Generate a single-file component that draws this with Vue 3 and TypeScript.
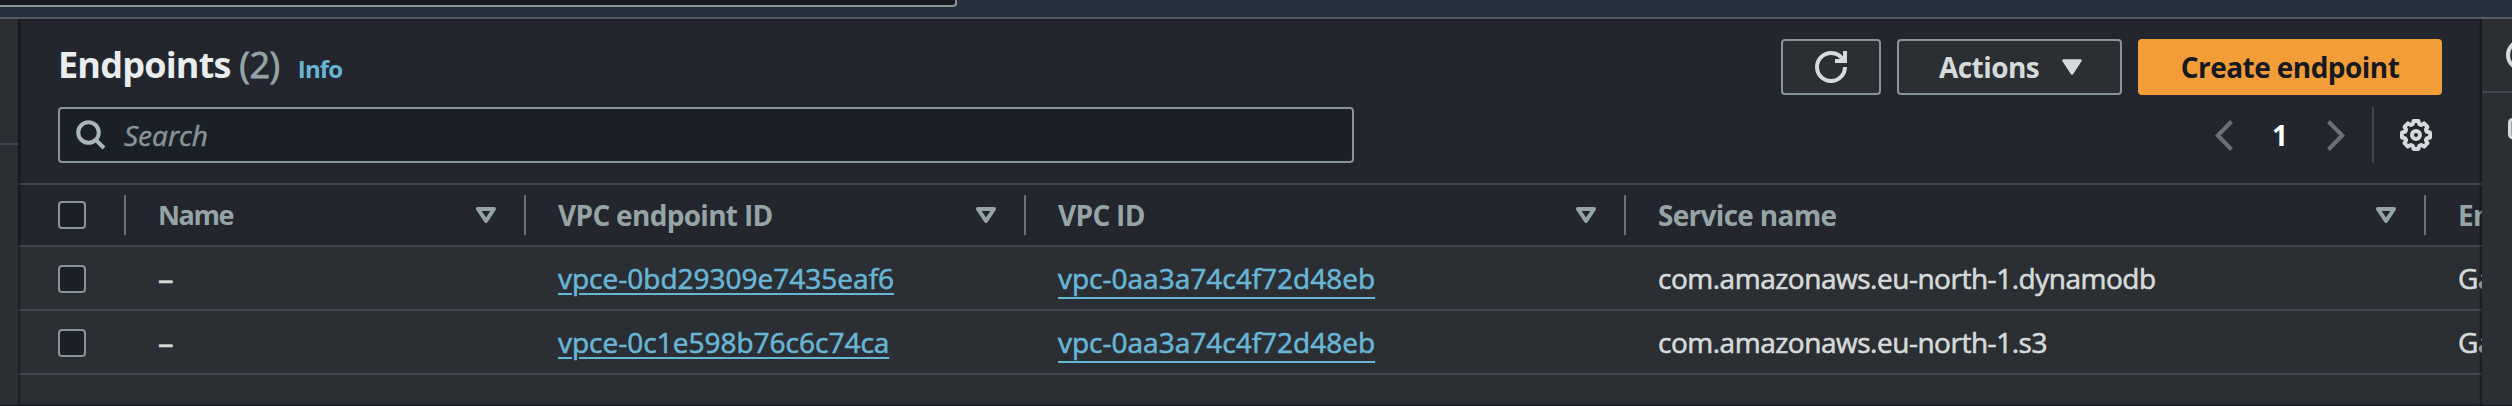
<script setup lang="ts">
interface Column {
  key: string
  label: string
  sortable: boolean
}

interface Endpoint {
  name: string
  endpointId: string
  vpcId: string
  service: string
  type: string
}

const columns: Column[] = [
  { key: 'name', label: 'Name', sortable: true },
  { key: 'endpoint', label: 'VPC endpoint ID', sortable: true },
  { key: 'vpc', label: 'VPC ID', sortable: true },
  { key: 'service', label: 'Service name', sortable: true },
  { key: 'type', label: 'Endpoint type', sortable: false },
]

const endpoints: Endpoint[] = [
  {
    name: '–',
    endpointId: 'vpce-0bd29309e7435eaf6',
    vpcId: 'vpc-0aa3a74c4f72d48eb',
    service: 'com.amazonaws.eu-north-1.dynamodb',
    type: 'Gateway',
  },
  {
    name: '–',
    endpointId: 'vpce-0c1e598b76c6c74ca',
    vpcId: 'vpc-0aa3a74c4f72d48eb',
    service: 'com.amazonaws.eu-north-1.s3',
    type: 'Gateway',
  },
]
</script>

<template>
  <div class="console">
    <header class="topnav"><div class="nav-search"></div></header>
    <div class="body">
      <aside class="rail left"><div class="rail-head"></div></aside>
      <main class="panel">
        <section class="head">
          <div class="title-row">
            <h1><span class="t-main">Endpoints</span> <span class="count">(2)</span></h1>
            <a class="info">Info</a>
            <div class="actions">
              <button class="btn icon-btn" aria-label="Refresh">
                <svg width="32" height="32" viewBox="0 0 16 16" fill="none" stroke="currentColor" stroke-width="2">
                  <path d="M15 8c0 3.87-3.13 7-7 7s-7-3.13-7-7 3.13-7 7-7c2.79 0 5.2 1.63 6.33 4" />
                  <path d="M10 5h5V0" />
                </svg>
              </button>
              <button class="btn menu-btn">
                <span class="t-actions">Actions</span>
                <svg width="20" height="16" viewBox="0 0 20 16"><path d="M1.5 1.5h17L10 14.5z" fill="currentColor" stroke="currentColor" stroke-width="2.5" stroke-linejoin="round" /></svg>
              </button>
              <button class="btn primary"><span class="t-create">Create endpoint</span></button>
            </div>
          </div>
          <div class="filter-row">
            <div class="search">
              <svg width="30" height="30" viewBox="0 0 30 30" fill="none" stroke="currentColor" stroke-width="4">
                <circle cx="12.5" cy="12.5" r="10.3" />
                <path d="M19.8 19.8l8.2 8.2" />
              </svg>
              <span class="t-search">Search</span>
            </div>
            <div class="pager">
              <svg width="18" height="31" viewBox="0 0 18 31" fill="none" stroke="currentColor" stroke-width="4"><path d="M16.5 1.5L2.8 15.5l13.7 14" /></svg>
              <span class="page">1</span>
              <svg width="18" height="31" viewBox="0 0 18 31" fill="none" stroke="currentColor" stroke-width="4"><path d="M1.5 1.5l13.7 14-13.7 14" /></svg>
            </div>
            <div class="prefs">
              <svg width="32" height="32" viewBox="0 0 32 32" fill="none" stroke="currentColor" stroke-width="4">
                <circle cx="16" cy="16" r="4" />
                <path stroke-linejoin="round" d="M13.6 2h4.8l.9 3.2 1.9.8 2.9-1.6 3.4 3.4-1.6 2.9.8 1.9 3.3.9v5l-3.3.9-.8 1.9 1.6 2.9-3.4 3.4-2.9-1.6-1.9.8-.9 3.2h-4.8l-.9-3.2-1.9-.8-2.9 1.6-3.4-3.4 1.6-2.9-.8-1.9-3.3-.9v-5l3.3-.9.8-1.9-1.6-2.9 3.4-3.4 2.9 1.6 1.9-.8z" />
              </svg>
            </div>
          </div>
        </section>
        <div class="row header-row">
          <div class="cell check"><i class="box"></i></div>
          <div v-for="c in columns" :key="c.key" class="cell">
            <span :class="'h-' + c.key">{{ c.label }}</span>
            <svg v-if="c.sortable" class="sort" width="20" height="16" viewBox="0 0 20 16"><path d="M2 2h16L10 14z" fill="none" stroke="currentColor" stroke-width="4" stroke-linejoin="round" /></svg>
          </div>
        </div>
        <div v-for="e in endpoints" :key="e.endpointId" class="row">
          <div class="cell check"><i class="box"></i></div>
          <div class="cell"><span class="dash">{{ e.name }}</span></div>
          <div class="cell"><a class="link id">{{ e.endpointId }}</a></div>
          <div class="cell"><a class="link vpc">{{ e.vpcId }}</a></div>
          <div class="cell"><span class="service">{{ e.service }}</span></div>
          <div class="cell"><span>{{ e.type }}</span></div>
        </div>
      </main>
      <aside class="rail right">
        <div class="rail-tool">
          <svg width="32" height="32" viewBox="0 0 32 32" fill="none" stroke="currentColor" stroke-width="4"><circle cx="16" cy="16" r="14" /><path d="M16 14v9M16 8v4" /></svg>
        </div>
        <div class="rail-tool second">
          <svg width="32" height="32" viewBox="0 0 32 32" fill="#9ba3a5" stroke="currentColor" stroke-width="3"><rect x="3.5" y="6.5" width="24" height="18" rx="3" /></svg>
        </div>
      </aside>
    </div>
  </div>
</template>

<style>
body {
  background: #2a2e33;
  overflow: hidden;
}
</style>

<style scoped>
* {
  box-sizing: border-box;
}
.console {
  display: flex;
  flex-direction: column;
  width: 2512px;
  height: 406px;
  overflow: hidden;
  background: #2b2e33;
  border-bottom: 1px solid #16191f;
  color: #d5dbdb;
  font: 400 28px/40px "Open Sans", "Noto Sans", sans-serif;
}
.console span,
.link,
.info {
  white-space: nowrap;
}
.topnav {
  flex: none;
  height: 19px;
  background: #262f3e;
  border-bottom: 2px solid #545b64;
}
.nav-search {
  width: 957px;
  height: 7px;
  background: #16191f;
  border: solid #879596;
  border-width: 0 2px 2px 0;
  border-radius: 0 0 4px 0;
}
.body {
  flex: 1;
  min-height: 0;
  display: flex;
}
.rail {
  flex: none;
  background: #2b2e33;
}
.left {
  width: 18px;
}
.rail-head {
  height: 126px;
  border-bottom: 2px solid #414750;
}
.right {
  width: 30px;
  overflow: hidden;
}
.rail-tool {
  height: 74px;
  padding: 20px 0 0 24px;
  border-bottom: 2px solid #414750;
}
.rail-tool.second {
  border: 0;
}
.panel {
  position: relative;
  flex: 1;
  min-width: 0;
  overflow: hidden;
}
.panel::after {
  content: "";
  position: absolute;
  inset: 0;
  box-shadow: inset 2px 0 2px rgba(0, 0, 0, 0.4), inset -2px 0 2px rgba(0, 0, 0, 0.4);
  pointer-events: none;
}
.head {
  height: 166px;
  padding: 20px 40px 0;
  background: #23262e;
  border-bottom: 2px solid #414750;
}
.title-row {
  display: flex;
  height: 68px;
}
h1 {
  margin: 0;
  font-size: 36px;
  line-height: 52px;
  font-weight: 700;
  letter-spacing: -0.8px;
  color: #eaeded;
  white-space: nowrap;
}
.count {
  font-weight: 400;
  letter-spacing: -0.4px;
  color: #95a5a6;
  -webkit-text-stroke: 0.8px;
}
.info {
  margin-left: 18px;
  font-size: 24px;
  font-weight: 700;
  letter-spacing: -0.9px;
  line-height: 60px;
  color: #68b6d6;
}
.actions {
  display: flex;
  gap: 16px;
  margin-left: auto;
}
.btn {
  display: flex;
  align-items: center;
  height: 56px;
  padding: 0 40px;
  border: 2px solid #879596;
  border-radius: 4px;
  background: #2b2e33;
  color: #d5dbdb;
  font: 700 28px/40px "Open Sans", "Noto Sans", sans-serif;
  letter-spacing: -0.55px;
}
.icon-btn {
  width: 100px;
  padding: 0 32px;
}
.menu-btn {
  width: 225px;
  justify-content: space-between;
  padding: 0 38px 0 40px;
}
.primary {
  width: 304px;
  justify-content: center;
  border-color: #f29d38;
  background: #f29d38;
  color: #16191f;
}
.filter-row {
  display: flex;
  height: 56px;
}
.search {
  display: flex;
  align-items: center;
  gap: 18px;
  width: 1296px;
  padding-left: 16px;
  border: 2px solid #879596;
  border-radius: 4px;
  background: #1b1f27;
  color: #aab7b8;
}
.t-search {
  font-style: italic;
  color: #879596;
  -webkit-text-stroke: 0.5px;
}
.pager {
  display: flex;
  align-items: center;
  justify-content: space-between;
  width: 130px;
  margin-left: auto;
  color: #687078;
}
.page {
  font-weight: 700;
  color: #fff;
}
.prefs {
  display: flex;
  align-items: center;
  margin-left: 27px;
  padding: 0 10px 0 26px;
  border-left: 2px solid #414750;
}
.row {
  display: grid;
  grid-template-columns: 108px 400px 500px 600px 800px 400px;
  height: 64px;
  border-bottom: 2px solid #414750;
  background: #2b2e33;
  -webkit-text-stroke: 0.6px;
}
.header-row {
  height: 62px;
  background: #23262e;
  color: #95a5a6;
  font-weight: 700;
  letter-spacing: -0.7px;
  -webkit-text-stroke: 0;
}
.h-name {
  font-size: 27px;
  letter-spacing: -1.4px;
}
.service {
  letter-spacing: -0.48px;
}
.cell {
  display: flex;
  align-items: center;
  padding-left: 32px;
}
.check {
  padding-left: 40px;
}
.box {
  width: 28px;
  height: 28px;
  margin-top: 2px;
  border: 2px solid #879596;
  border-radius: 4px;
  background: #1b1f27;
}
.header-row .box {
  margin-top: 0;
}
.dash {
  font-size: 31px;
}
.header-row .cell {
  position: relative;
  justify-content: space-between;
  padding-right: 30px;
}
.header-row .cell:not(:last-child)::after {
  content: "";
  position: absolute;
  right: 0;
  top: 10px;
  width: 2px;
  height: 40px;
  background: #687078;
}
.header-row .check::after {
  background: #414750;
}
.link {
  color: #68b6d6;
  text-decoration: underline;
  text-decoration-thickness: 2px;
  text-underline-offset: 4px;
}
.vpc {
  text-underline-offset: 8px;
}
</style>
